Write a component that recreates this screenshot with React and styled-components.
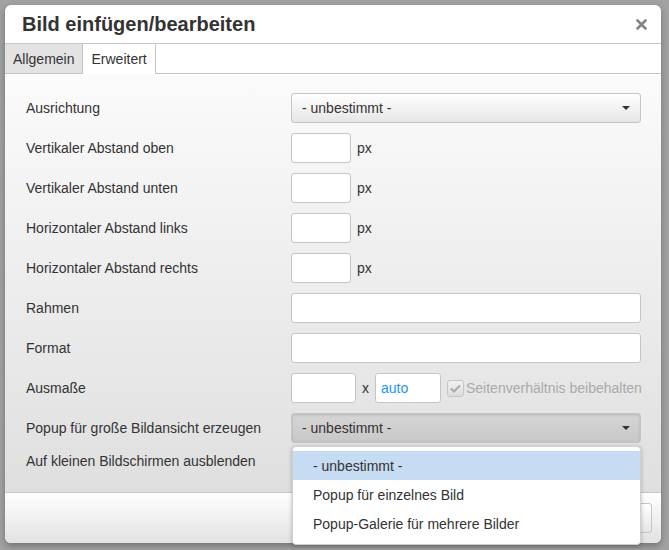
import styled, { createGlobalStyle, css } from 'styled-components';

const GlobalStyle = createGlobalStyle`
  html, body {
    margin: 0;
    padding: 0;
    background: #a2a2a2;
    font-family: "Liberation Sans", Arial, sans-serif;
  }
`;

const Page = styled.div`
  width: 669px;
  height: 550px;
  padding: 5px 0 0 5px;
  box-sizing: border-box;
  overflow: hidden;
`;

const Dialog = styled.div`
  position: relative;
  width: 656px;
  height: 538px;
  display: flex;
  flex-direction: column;
  background: #fff;
  border-radius: 6px;
  box-shadow: 0 3px 7px rgba(0, 0, 0, 0.3);
`;

const Header = styled.div`
  height: 38px;
  display: flex;
  align-items: center;
  justify-content: space-between;
  padding: 0 14px 0 17px;
  border-bottom: 1px solid #c5c5c5;
  border-radius: 6px 6px 0 0;
`;

const Title = styled.h1`
  margin: 0;
  font-size: 20px;
  font-weight: bold;
  color: #333;
`;

const Close = styled.button`
  border: 0;
  background: none;
  padding: 0;
  display: flex;
  cursor: pointer;
`;

const Tabs = styled.div`
  height: 29px;
  display: flex;
  border-bottom: 1px solid #c5c5c5;
`;

const Tab = styled.div`
  display: flex;
  align-items: center;
  padding: 0 8px;
  font-size: 14px;
  color: #333;
  border-right: 1px solid #c5c5c5;
  background: ${p => (p.$active ? '#fff' : '#e3e3e3')};
  ${p => p.$active && css`
    margin-bottom: -1px;
    height: 30px;
  `}
`;

const Body = styled.div`
  flex: 1;
  padding: 19px 21px 0 21px;
  background: linear-gradient(#fbfbfb, #dfdfdf);
  display: flex;
  flex-direction: column;
  gap: 10px;
`;

const Row = styled.div`
  display: grid;
  grid-template-columns: 265px 350px;
  align-items: center;
  min-height: ${p => p.$h || 30}px;
`;

const Label = styled.label`
  font-size: 14px;
  color: #333;
`;

const Control = styled.div`
  display: flex;
  align-items: center;
  gap: 6px;
  font-size: 14px;
  color: #333;
  white-space: nowrap;
`;

const Select = styled.div`
  width: 350px;
  height: 30px;
  box-sizing: border-box;
  display: flex;
  align-items: center;
  justify-content: space-between;
  padding: 0 10px;
  border: 1px solid #c5c5c5;
  border-radius: 3px;
  font-size: 14px;
  color: #333;
  background: ${p => (p.$pressed
    ? 'linear-gradient(#d6d6d6, #c8c8c8)'
    : 'linear-gradient(#fff, #e6e6e6)')};
  box-shadow: ${p => (p.$pressed ? 'inset 0 1px 3px rgba(0,0,0,0.15)' : 'none')};
`;

const Caret = styled.span`
  width: 0;
  height: 0;
  border-left: 4px solid transparent;
  border-right: 4px solid transparent;
  border-top: 4px solid #333;
`;

const Input = styled.input`
  width: ${p => p.$w || 350}px;
  height: 30px;
  box-sizing: border-box;
  border: 1px solid #c5c5c5;
  border-radius: 3px;
  background: #fff;
  padding: 0 5px;
  font-family: inherit;
  font-size: 14px;
  color: #2196f3;
  outline: none;
`;

const Check = styled.span`
  width: 17px;
  height: 17px;
  flex: none;
  box-sizing: border-box;
  border: 1px solid #c5c5c5;
  border-radius: 3px;
  background: linear-gradient(#f2f2f2, #dcdcdc);
  display: flex;
  align-items: center;
  justify-content: center;
`;

const Muted = styled.span`
  color: #aaa;
  margin-left: -4px;
`;

const Footer = styled.div`
  height: 50px;
  border-top: 1px solid #c5c5c5;
  border-radius: 0 0 6px 6px;
  background: linear-gradient(#fff, #e2e2e2);
  display: flex;
  align-items: center;
  justify-content: flex-end;
  padding-right: 9px;
  gap: 6px;
`;

const Button = styled.button`
  width: ${p => p.$w}px;
  height: 30px;
  border: 1px solid #c5c5c5;
  border-radius: 3px;
  background: linear-gradient(#fff, #e6e6e6);
`;

const Menu = styled.ul`
  position: absolute;
  left: 287px;
  top: 441px;
  width: 349px;
  margin: 0;
  padding: 4px 0 6px;
  list-style: none;
  background: #fff;
  border: 1px solid #d0d0d0;
  border-radius: 4px;
  box-sizing: border-box;
  box-shadow: 0 1px 4px rgba(0, 0, 0, 0.25);
  z-index: 10;
`;

const MenuItem = styled.li`
  height: 29px;
  display: flex;
  align-items: center;
  padding-left: 20px;
  font-size: 14px;
  color: #333;
  background: ${p => (p.$selected ? '#c6dcf2' : 'transparent')};
`;

const CloseIcon = () => (
  <svg width="11" height="11" viewBox="0 0 11 11">
    <path d="M1.5 1.5 L9.5 9.5 M9.5 1.5 L1.5 9.5" stroke="#858585" strokeWidth="2.6" strokeLinecap="round" />
  </svg>
);

const CheckMark = () => (
  <svg width="11" height="9" viewBox="0 0 11 9">
    <path d="M1 4.5 L4 7.5 L10 1.5" fill="none" stroke="#aaa" strokeWidth="2" />
  </svg>
);

const pxRows = [
  'Vertikaler Abstand oben',
  'Vertikaler Abstand unten',
  'Horizontaler Abstand links',
  'Horizontaler Abstand rechts',
];

export default function App() {
  return (
    <Page>
      <GlobalStyle />
      <Dialog>
        <Header>
          <Title>Bild einfügen/bearbeiten</Title>
          <Close aria-label="Schließen"><CloseIcon /></Close>
        </Header>
        <Tabs>
          <Tab>Allgemein</Tab>
          <Tab $active>Erweitert</Tab>
        </Tabs>
        <Body>
          <Row>
            <Label>Ausrichtung</Label>
            <Select>- unbestimmt -<Caret /></Select>
          </Row>
          {pxRows.map(label => (
            <Row key={label}>
              <Label>{label}</Label>
              <Control>
                <Input $w={60} />
                px
              </Control>
            </Row>
          ))}
          <Row>
            <Label>Rahmen</Label>
            <Input />
          </Row>
          <Row>
            <Label>Format</Label>
            <Input />
          </Row>
          <Row>
            <Label>Ausmaße</Label>
            <Control>
              <Input $w={65} />
              x
              <Input $w={66} defaultValue="auto" />
              <Check><CheckMark /></Check>
              <Muted>Seitenverhältnis beibehalten</Muted>
            </Control>
          </Row>
          <Row>
            <Label>Popup für große Bildansicht erzeugen</Label>
            <Select $pressed>- unbestimmt -<Caret /></Select>
          </Row>
          <Row $h={16}>
            <Label>Auf kleinen Bildschirmen ausblenden</Label>
            <Control />
          </Row>
        </Body>
        <Footer>
          <Button $w={40} aria-label="Ok" />
          <Button $w={80} aria-label="Abbrechen" />
        </Footer>
        <Menu>
          <MenuItem $selected>- unbestimmt -</MenuItem>
          <MenuItem>Popup für einzelnes Bild</MenuItem>
          <MenuItem>Popup-Galerie für mehrere Bilder</MenuItem>
        </Menu>
      </Dialog>
    </Page>
  );
}
